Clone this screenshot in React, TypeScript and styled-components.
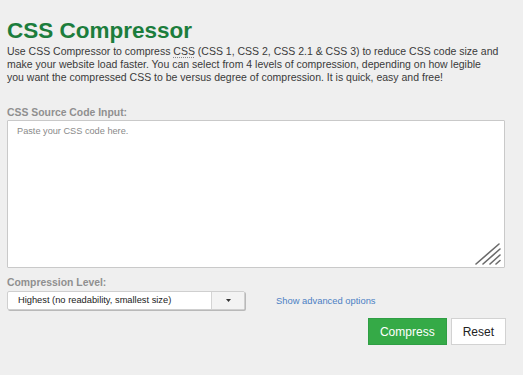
import React, { FC } from "react";
import styled, { createGlobalStyle } from "styled-components";

const GlobalStyle = createGlobalStyle`
  html, body {
    margin: 0;
    padding: 0;
    background: #efefef;
  }
  body {
    font-family: "Liberation Sans", Arial, sans-serif;
  }
`;

const Page = styled.div`
  width: 523px;
  height: 375px;
  box-sizing: border-box;
  padding: 17px 18px 0 7px;
  overflow: hidden;
`;

const Title = styled.h1`
  margin: 0;
  font-size: 22.5px;
  line-height: 27px;
  font-weight: bold;
  color: #1c7d3c;
`;

const Intro = styled.p`
  margin: 1px 0 0;
  font-size: 10.5px;
  line-height: 13px;
  color: #3a3a3a;
  white-space: nowrap;
`;

const Dotted = styled.span`
  text-decoration: underline dotted #888;
  text-underline-offset: 2px;
`;

const Label = styled.div<{ $top: number }>`
  margin-top: ${(p) => p.$top}px;
  font-size: 10.4px;
  line-height: 12px;
  font-weight: bold;
  color: #8f8f8f;
`;

const SourceWrap = styled.div`
  position: relative;
  width: 498px;
  margin-top: 1px;
`;

const Source = styled.textarea`
  display: block;
  box-sizing: border-box;
  width: 498px;
  height: 148px;
  padding: 4px 9px;
  border: 1px solid #c9c9c9;
  border-radius: 1px;
  background: #fff;
  font-family: "Liberation Sans", Arial, sans-serif;
  font-size: 9.2px;
  line-height: 12px;
  color: #333;
  resize: none;
  outline: none;

  &::placeholder {
    color: #8a8a8a;
  }
`;

const Grip = styled.svg`
  position: absolute;
  right: 4px;
  bottom: 3px;
`;

const OptionsRow = styled.div`
  display: flex;
  align-items: center;
  margin-top: 2px;
`;

const Select = styled.div`
  display: flex;
  box-sizing: border-box;
  width: 238px;
  height: 19px;
  border: 1px solid #cfcfcf;
  border-radius: 2px;
  background: #fff;
  box-shadow: 1px 1px 0 #b9b9b9;
`;

const SelectValue = styled.div`
  flex: 1;
  padding-left: 10px;
  font-size: 9.3px;
  line-height: 17px;
  color: #222;
`;

const SelectArrow = styled.div`
  width: 32px;
  display: flex;
  align-items: center;
  justify-content: center;
  border-left: 1px solid #d4d4d4;
  background: #f3f3f3;
`;

const AdvancedLink = styled.a`
  margin-left: 31px;
  font-size: 9.4px;
  color: #4c7fc4;
  text-decoration: none;
`;

const Actions = styled.div`
  display: flex;
  justify-content: flex-end;
  gap: 4px;
  width: 499px;
  margin-top: 8px;
`;

const Button = styled.button<{ $primary?: boolean }>`
  box-sizing: border-box;
  height: 27px;
  padding: 0 11px;
  border: 1px solid ${(p) => (p.$primary ? "#2f9e44" : "#d2d2d2")};
  background: ${(p) => (p.$primary ? "#35aa47" : "#fff")};
  color: ${(p) => (p.$primary ? "#fff" : "#222")};
  font-family: "Liberation Sans", Arial, sans-serif;
  font-size: 12px;
  cursor: pointer;
`;

const App: FC = () => {
  return (
    <>
      <GlobalStyle />
      <Page>
        <Title>CSS Compressor</Title>
        <Intro>
          Use CSS Compressor to compress <Dotted>CSS</Dotted> (CSS 1, CSS 2, CSS 2.1 &amp; CSS 3) to reduce CSS
          code size and
          <br />
          make your website load faster. You can select from 4 levels of compression, depending on how legible
          <br />
          you want the compressed CSS to be versus degree of compression. It is quick, easy and free!
        </Intro>

        <Label $top={23}>CSS Source Code Input:</Label>
        <SourceWrap>
          <Source placeholder="Paste your CSS code here." />
          <Grip width="26" height="22" viewBox="0 0 26 22">
            <g stroke="#6b6b6b" strokeWidth="1.6" strokeLinecap="round">
              <line x1="1" y1="21" x2="24" y2="1" />
              <line x1="8" y1="21" x2="25" y2="6" />
              <line x1="15" y1="21" x2="25" y2="12" />
              <line x1="21" y1="21" x2="25" y2="17.5" />
            </g>
          </Grip>
        </SourceWrap>

        <Label $top={9}>Compression Level:</Label>
        <OptionsRow>
          <Select>
            <SelectValue>Highest (no readability, smallest size)</SelectValue>
            <SelectArrow>
              <svg width="5" height="3" viewBox="0 0 5 3">
                <path d="M0 0 L5 0 L2.5 3 Z" fill="#333" />
              </svg>
            </SelectArrow>
          </Select>
          <AdvancedLink href="#">Show advanced options</AdvancedLink>
        </OptionsRow>

        <Actions>
          <Button $primary>Compress</Button>
          <Button>Reset</Button>
        </Actions>
      </Page>
    </>
  );
};

export default App;
